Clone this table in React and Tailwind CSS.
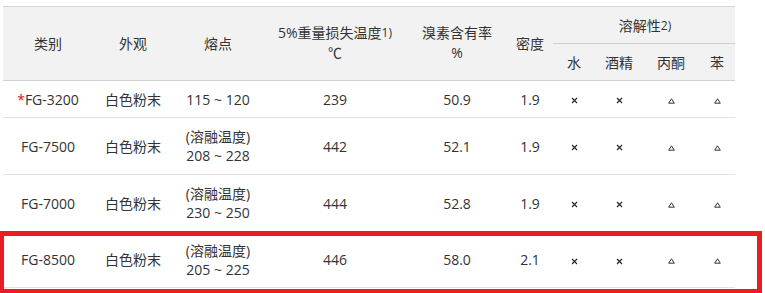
const cols = [90, 80, 90, 144, 100, 46, 42, 48, 56, 36]

const rows = [
    { name: "FG-3200", star: true, look: "白色粉末", melt: ["115 ~ 120"], loss: "239", br: "50.9", dens: "1.9", h: "h-[37px]" },
    { name: "FG-7500", look: "白色粉末", melt: ["(溶融温度)", "208 ~ 228"], loss: "442", br: "52.1", dens: "1.9", h: "h-[57px]" },
    { name: "FG-7000", look: "白色粉末", melt: ["(溶融温度)", "230 ~ 250"], loss: "444", br: "52.8", dens: "1.9", h: "h-[57px]" },
    { name: "FG-8500", look: "白色粉末", melt: ["(溶融温度)", "205 ~ 225"], loss: "446", br: "58.0", dens: "2.1", h: "h-[56px]" },
]

const Cross = () => (
    <svg width="7" height="7" viewBox="0 0 7 7" className="inline-block align-middle">
        <path d="M1 1L6 6M6 1L1 6" stroke="#222" strokeWidth="1.1" />
    </svg>
)

const Tri = () => (
    <svg width="7" height="6" viewBox="0 0 7 6" className="inline-block align-middle">
        <path d="M3.5 0.8L6.3 5.2H0.7Z" fill="none" stroke="#333" strokeWidth="1" />
    </svg>
)

export default function App() {
    return (
        <div className="relative w-[765px] h-[293px] overflow-hidden bg-white pt-[6px] pl-[3px] text-[14px] text-[#333] font-['Open_Sans','Noto_Sans_CJK_SC',sans-serif]">
            <table className="table-fixed border-collapse w-[732px] text-center">
                <colgroup>
                    {cols.map((w, i) => (
                        <col key={i} style={{ width: w }} />
                    ))}
                </colgroup>
                <thead className="bg-[#f2f2f2]">
                    <tr className="h-[37px] border-t border-[#d6d6d6]">
                        <th rowSpan={2} className="font-normal">类别</th>
                        <th rowSpan={2} className="font-normal">外观</th>
                        <th rowSpan={2} className="font-normal">熔点</th>
                        <th rowSpan={2} className="font-normal leading-[20px] pb-[1px]">
                            5%重量损失温度<sup className="text-[12px] relative -top-[1px]">1)</sup>
                            <br />℃
                        </th>
                        <th rowSpan={2} className="font-normal leading-[20px] pb-[1px]">
                            溴素含有率
                            <br />%
                        </th>
                        <th rowSpan={2} className="font-normal">密度</th>
                        <th colSpan={4} className="font-normal border-b border-[#d0d0d0] pl-[2px]">
                            溶解性<sup className="text-[12px] relative -top-[1px]">2)</sup>
                        </th>
                    </tr>
                    <tr className="h-[37px] border-b border-[#d0d0d0]">
                        <th className="font-normal">水</th>
                        <th className="font-normal">酒精</th>
                        <th className="font-normal">丙酮</th>
                        <th className="font-normal">苯</th>
                    </tr>
                </thead>
                <tbody>
                    {rows.map((r) => (
                        <tr key={r.name} className={`${r.h} border-b border-[#e3e3e3]`}>
                            <td>
                                {r.star && <span className="text-[#d0121b]">*</span>}
                                {r.name}
                            </td>
                            <td>{r.look}</td>
                            <td className="leading-[19px]">
                                {r.melt.map((m) => (
                                    <div key={m}>{m}</div>
                                ))}
                            </td>
                            <td>{r.loss}</td>
                            <td>{r.br}</td>
                            <td>{r.dens}</td>
                            <td><Cross /></td>
                            <td><Cross /></td>
                            <td><Tri /></td>
                            <td><Tri /></td>
                        </tr>
                    ))}
                </tbody>
            </table>

            {/* highlight box */}
            <div className="absolute left-[-1px] top-[231px] w-[763px] h-[63px] border-[5px] border-[#ec1c24]"></div>
        </div>
    )
}
